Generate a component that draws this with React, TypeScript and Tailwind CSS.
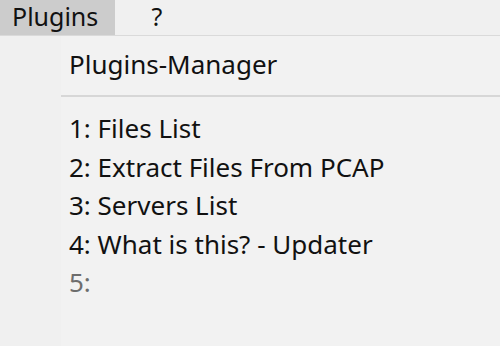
import React from 'react';

const items = [
  { label: '1: Files List', disabled: false },
  { label: '2: Extract Files From PCAP', disabled: false },
  { label: '3: Servers List', disabled: false },
  { label: '4: What is this? - Updater', disabled: false },
  { label: '5:', disabled: true },
];

export default function App() {
  return (
    <div
      className="w-[500px] h-[346px] overflow-hidden bg-[#f0f0f0] text-[26px] leading-none text-[#111111]"
      style={{ fontFamily: '"Noto Sans", "Open Sans", sans-serif' }}
    >
      <div className="h-[36px] flex items-stretch bg-[#f0f0f0] border-b border-[#dadada] text-[25px]">
        <div className="w-[115px] bg-[#cccccc] flex items-center pl-[12px] pb-[2px]">Plugins</div>
        <div className="w-[84px] flex items-center justify-center pb-[2px]">?</div>
      </div>
      <div className="flex h-[310px]">
        <div className="w-[61px] bg-[#f0f0f0]" />
        <div className="flex-1 bg-[#f2f2f2]">
          <div className="h-[59px] flex items-center pl-[8px] pb-[4px]">Plugins-Manager</div>
          <div className="h-[2px] bg-[#d7d7d7]" />
          <div className="pt-[12px]">
            {items.map((it) => (
              <div
                key={it.label}
                className={`h-[38.5px] flex items-center pl-[8px] ${it.disabled ? 'text-[#6d6d6d]' : ''}`}
              >
                {it.label}
              </div>
            ))}
          </div>
        </div>
      </div>
    </div>
  );
}
